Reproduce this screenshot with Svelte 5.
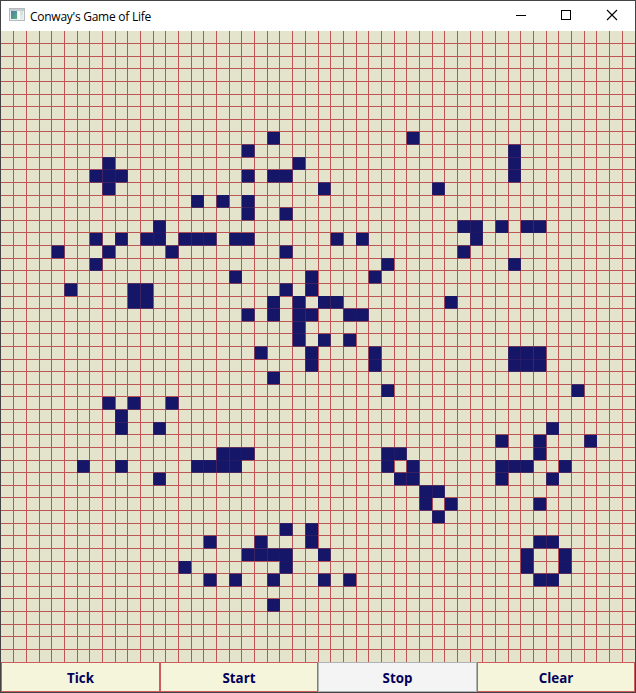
<script>
  const SIZE = 50;
  const W = 634;
  const H = 631;
  const cw = W / SIZE;
  const ch = H / SIZE;

  // live cells: row -> columns
  const live = {
    8: [21, 32],
    9: [19, 40],
    10: [8, 23, 40],
    11: [7, 8, 9, 19, 21, 22, 40],
    12: [8, 25, 34],
    13: [15, 17, 19],
    14: [19, 22],
    15: [12, 36, 37, 39, 41, 42],
    16: [7, 9, 11, 12, 14, 15, 16, 18, 19, 26, 28, 37],
    17: [4, 8, 13, 22, 36],
    18: [7, 30, 40],
    19: [18, 24, 29],
    20: [5, 10, 11, 22, 24],
    21: [10, 11, 21, 23, 25, 26, 35],
    22: [19, 21, 23, 24, 27, 28],
    23: [23],
    24: [23, 25, 27],
    25: [20, 24, 29, 40, 41, 42],
    26: [24, 29, 40, 41, 42],
    27: [21],
    28: [30, 45],
    29: [8, 10, 13],
    30: [9],
    31: [9, 12, 43],
    32: [39, 42, 46],
    33: [17, 18, 19, 30, 31, 42],
    34: [6, 9, 15, 16, 17, 18, 30, 32, 39, 40, 41, 44],
    35: [12, 31, 32, 39, 43],
    36: [33, 34],
    37: [33, 35, 42],
    38: [34],
    39: [22, 24],
    40: [16, 20, 24, 42, 43],
    41: [19, 20, 21, 22, 25, 41, 44],
    42: [14, 22, 41, 44],
    43: [16, 18, 21, 25, 27, 42, 43],
    45: [21]
  };

  const cells = Object.entries(live).flatMap(([r, cols]) => cols.map((c) => ({ x: c * cw, y: r * ch })));
  const lines = Array.from({ length: SIZE - 1 }, (_, i) => i + 1);
  const buttons = ['Tick', 'Start', 'Stop', 'Clear'];
</script>

<div class="window">
  <header>
    <svg class="app-icon" width="16" height="14" viewBox="0 0 16 14">
      <defs>
        <linearGradient id="pane" x1="0" y1="0" x2="1" y2="1">
          <stop offset="0" stop-color="#4a7fa5" />
          <stop offset="1" stop-color="#5fae7c" />
        </linearGradient>
      </defs>
      <rect x="0.5" y="0.5" width="15" height="12" fill="#eef1f3" stroke="#b4babe" />
      <rect x="1" y="1" width="14" height="2" fill="#c5cdd3" />
      <rect x="2" y="3" width="6" height="8" fill="url(#pane)" />
      <rect x="9" y="3" width="2" height="8" fill="#f8fafb" />
      <rect x="11" y="3" width="3" height="4" fill="#d4e4dc" />
      <rect x="11" y="7" width="3" height="4" fill="#e3e7ee" />
    </svg>
    <h1>Conway's Game of Life</h1>
    <div class="controls">
      <svg width="46" height="30" viewBox="0 0 46 30"><path d="M17 14.5h10" /></svg>
      <svg width="46" height="30" viewBox="0 0 46 30"><rect x="16.5" y="9.5" width="9" height="9" /></svg>
      <svg width="46" height="30" viewBox="0 0 46 30"><path class="cross" d="M16 9l10 10M26 9l-10 10" /></svg>
    </div>
  </header>

  <svg class="board" width={W} height={H} viewBox="0 0 {W} {H}">
    {#each lines as i}
      <rect class="line" x={Math.floor(i * cw)} y="0" width="1" height={H} />
      <rect class="line" x="0" y={Math.floor(i * ch)} width={W} height="1" />
    {/each}
    {#each cells as cell}
      <rect class="cell" x={cell.x} y={cell.y} width={cw} height={ch} />
    {/each}
  </svg>

  <footer>
    {#each buttons as label}
      <button class:disabled={label === 'Stop'}>{label}</button>
    {/each}
  </footer>
</div>

<style>
  .window {
    box-sizing: border-box;
    width: 636px;
    height: 693px;
    border: 1px solid #434346;
    background: #fff;
    display: flex;
    flex-direction: column;
    overflow: hidden;
  }

  header {
    height: 30px;
    display: flex;
    align-items: center;
    flex: none;
    padding-left: 8px;
  }

  .app-icon {
    flex: none;
    margin-top: -2px;
  }

  h1 {
    margin: 0 0 0 5px;
    padding-top: 1px;
    font: 400 12px/29px 'Open Sans', 'Noto Sans', sans-serif;
    letter-spacing: -0.26px;
    color: #000;
    white-space: nowrap;
  }

  .controls {
    margin-left: auto;
    display: flex;
    margin-right: -2px;
  }

  .controls svg {
    display: block;
    fill: none;
    stroke: #000;
    stroke-width: 1;
  }

  .controls .cross {
    stroke-width: 1.1;
  }

  .board {
    display: block;
    flex: none;
    background: #e4e4cd;
  }

  .line {
    fill: #be5453;
  }

  .cell {
    fill: #161668;
  }

  footer {
    display: grid;
    grid-template-columns: 159px 158px 159px 158px;
    height: 30px;
    flex: none;
  }

  button {
    box-sizing: border-box;
    margin: 0;
    padding: 2px 0 0;
    border: 1px solid #cd5c5c;
    border-radius: 0;
    background: #f5f5dc;
    color: #00005a;
    font: 700 13.33px/26px 'Open Sans', 'Noto Sans', sans-serif;
    text-align: center;
  }

  button.disabled {
    background: #f4f4f4;
    border-color: #adb2b5;
  }
</style>
